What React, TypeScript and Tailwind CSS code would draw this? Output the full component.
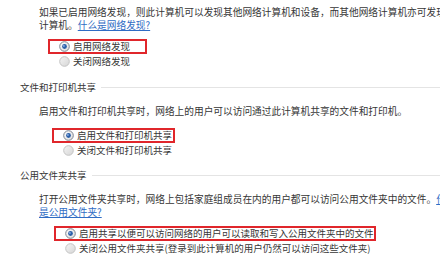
import React from 'react';

type RadioProps = {
  checked?: boolean;
  label: string;
  boxed?: boolean;
  boxLeft: number;
  boxWidth?: number;
};

const RadioDot: React.FC<{ checked?: boolean }> = ({ checked }) => (
  <svg width="11" height="11" viewBox="0 0 11 11" className="shrink-0">
    <defs>
      <linearGradient id={checked ? 'rg-on' : 'rg-off'} x1="0" y1="0" x2="1" y2="1">
        <stop offset="0" stopColor={checked ? '#ffffff' : '#f4f4f4'} />
        <stop offset="1" stopColor={checked ? '#dcdcdc' : '#d6d6d6'} />
      </linearGradient>
    </defs>
    <circle
      cx="5.5"
      cy="5.5"
      r="4.8"
      fill={`url(#${checked ? 'rg-on' : 'rg-off'})`}
      stroke={checked ? '#7d8590' : '#c4c4c4'}
      strokeWidth="1"
    />
    {checked && <circle cx="5.5" cy="5.5" r="2.4" fill="#2b5fa8" />}
    {checked && <circle cx="4.9" cy="4.9" r="0.9" fill="#8fb4e8" />}
  </svg>
);

// one radio line; boxed rows carry the red highlight frame
const RadioRow: React.FC<RadioProps> = ({ checked, label, boxed, boxLeft, boxWidth }) => (
  <div
    className={
      boxed
        ? 'flex items-center h-[15px] border-2 border-[#e0262b] pl-[9px] gap-[3px]'
        : 'flex items-center h-[15px] border-2 border-transparent pl-[9px] gap-[3px]'
    }
    style={{ marginLeft: boxLeft, width: boxWidth }}
  >
    <RadioDot checked={checked} />
    <span className="text-[9.5px] leading-none">{label}</span>
  </div>
);

const SectionHeader: React.FC<{ title: string }> = ({ title }) => (
  <div className="flex items-center h-[13px] pl-[20px] gap-[5px]">
    <span className="text-[9.5px] leading-none">{title}</span>
    <div className="flex-1 h-px bg-[#e4e4e4]" />
  </div>
);

export default function App() {
  return (
    <div className="w-[440px] h-[254px] overflow-hidden bg-white text-[#363636] whitespace-nowrap font-['Noto_Sans_CJK_SC','Noto_Sans',sans-serif]">
      {/* 网络发现 */}
      <div className="pl-[39px] pt-[6px] text-[9.7px] leading-[13px]">
        <p>如果已启用网络发现，则此计算机可以发现其他网络计算机和设备，而其他网络计算机亦可发现此</p>
        <p>
          计算机。<span className="text-[#2f6cc4] underline">什么是网络发现?</span>
        </p>
      </div>
      <div className="mt-[7px]">
        <RadioRow checked boxed boxLeft={48} boxWidth={99} label="启用网络发现" />
        <RadioRow boxLeft={48} label="关闭网络发现" />
      </div>

      {/* 文件和打印机共享 */}
      <div className="mt-[12px]">
        <SectionHeader title="文件和打印机共享" />
      </div>
      <div className="pl-[39px] mt-[11px] text-[9.7px] leading-[13px]">
        <p>启用文件和打印机共享时，网络上的用户可以访问通过此计算机共享的文件和打印机。</p>
      </div>
      <div className="mt-[10px]">
        <RadioRow checked boxed boxLeft={52} boxWidth={123} label="启用文件和打印机共享" />
        <RadioRow boxLeft={52} label="关闭文件和打印机共享" />
      </div>

      {/* 公用文件夹共享 */}
      <div className="mt-[11px]">
        <SectionHeader title="公用文件夹共享" />
      </div>
      <div className="pl-[39px] mt-[11px] text-[9.7px] leading-[13px]">
        <p>
          打开公用文件夹共享时，网络上包括家庭组成员在内的用户都可以访问公用文件夹中的文件。
          <span className="text-[#2f6cc4] underline">什么</span>
        </p>
        <p>
          <span className="text-[#2f6cc4] underline">是公用文件夹?</span>
        </p>
      </div>
      <div className="mt-[7px]">
        <RadioRow checked boxed boxLeft={54} boxWidth={322} label="启用共享以便可以访问网络的用户可以读取和写入公用文件夹中的文件" />
        <RadioRow boxLeft={54} label="关闭公用文件夹共享(登录到此计算机的用户仍然可以访问这些文件夹)" />
      </div>
    </div>
  );
}
